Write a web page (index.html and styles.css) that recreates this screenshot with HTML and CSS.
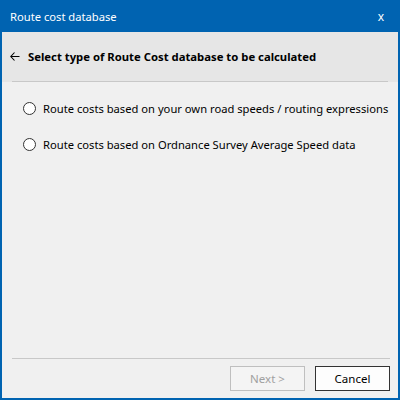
FILE: index.html
```html
<!DOCTYPE html>
<html lang="en">
<head>
    <meta charset="UTF-8">
    <title>Route cost database</title>
    <link rel="stylesheet" href="styles.css">
</head>
<body>
    <div class="window">
        <div class="titlebar">
            <span class="title">Route cost database</span>
            <span class="close">x</span>
        </div>
        <div class="header">
            <div class="header-row">
                <svg class="back" width="10" height="9" viewBox="0 0 10 9">
                    <path d="M4.5 0.5 L0.8 4.5 L4.5 8.5 M0.8 4.5 H9.5" fill="none" stroke="#000" stroke-width="1.1"/>
                </svg>
                <span class="heading">Select type of Route Cost database to be calculated</span>
            </div>
        </div>
        <div class="content">
            <label class="option"><span class="radio"></span>Route costs based on your own road speeds / routing expressions</label>
            <label class="option"><span class="radio"></span>Route costs based on Ordnance Survey Average Speed data</label>
        </div>
        <div class="footer">
            <button class="btn" disabled>Next &gt;</button>
            <button class="btn">Cancel</button>
        </div>
    </div>
</body>
</html>
```

FILE: styles.css
```css
html, body {
    margin: 0;
    padding: 0;
}
body {
    font-family: "Noto Sans", "Open Sans", sans-serif;
    font-size: 11.2px;
    color: #000;
}
.window {
    width: 400px;
    height: 400px;
    box-sizing: border-box;
    border: 2px solid #0063b1;
    border-top: none;
    background: #f0f0f0;
    display: flex;
    flex-direction: column;
}
.titlebar {
    height: 32px;
    flex-shrink: 0;
    margin: 0 -2px;
    padding: 0 16px 0 10px;
    background: #0063b1;
    color: #fff;
    display: flex;
    align-items: center;
    justify-content: space-between;
}
.title {
    font-size: 11.2px;
}
.close {
    font-size: 12px;
}
.header {
    background: #e6e6e6;
    padding: 0 8px 0 8px;
}
.header-row {
    height: 50px;
    box-sizing: border-box;
    border-bottom: 1px solid #c8c8c8;
    display: flex;
    align-items: center;
    margin-left: 2px;
    margin-right: 2px;
    white-space: nowrap;
}
.back {
    margin-left: -2px;
    margin-right: 8px;
}
.heading {
    font-weight: bold;
    font-size: 11.3px;
}
.content {
    flex: 1;
    padding: 17px 4px 0 21px;
    display: flex;
    flex-direction: column;
    gap: 18px;
}
.option {
    display: flex;
    align-items: center;
    height: 18px;
    white-space: nowrap;
}
.radio {
    flex-shrink: 0;
    width: 11px;
    height: 11px;
    border: 1px solid #333;
    border-radius: 50%;
    background: #fff;
    margin-right: 7px;
}
.footer {
    margin: 0 8px 0 10px;
    border-top: 1px solid #c8c8c8;
    height: 40px;
    box-sizing: border-box;
    display: flex;
    justify-content: flex-end;
    align-items: flex-start;
    gap: 10px;
    padding-top: 7px;
}
.btn {
    width: 75px;
    height: 25px;
    font-family: inherit;
    font-size: 11.5px;
    background: #fdfdfd;
    border: 1px solid #333;
    padding: 0;
}
.btn:disabled {
    color: #a0a0a0;
    border-color: #bfbfbf;
    background: #f4f4f4;
}
```
